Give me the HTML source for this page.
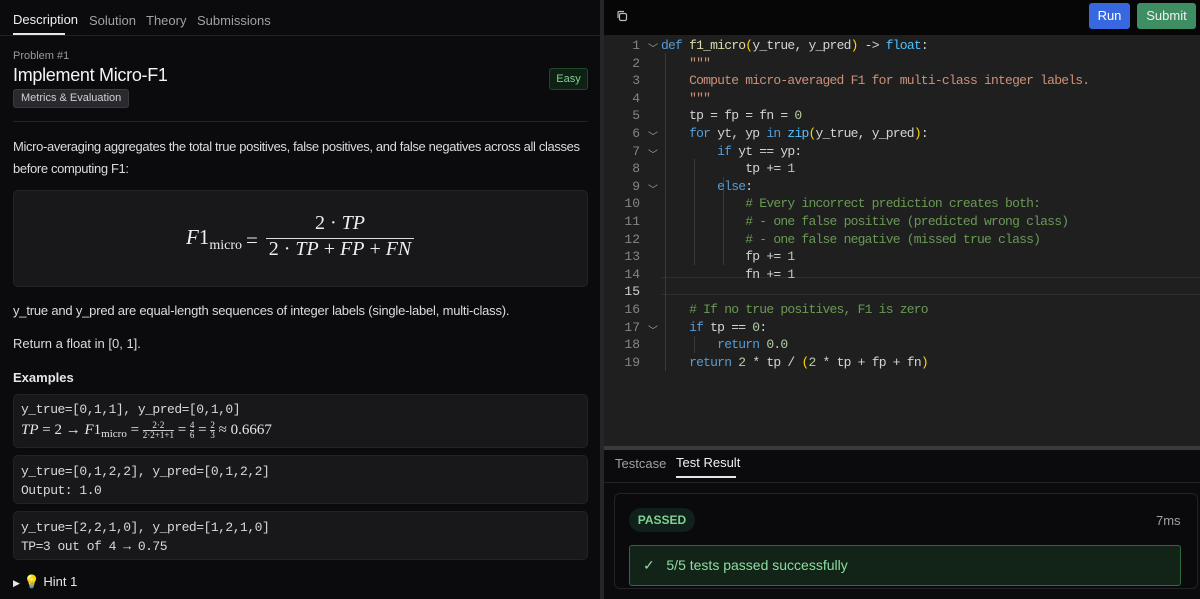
<!DOCTYPE html>
<html><head><meta charset="utf-8"><style>
*{box-sizing:border-box;margin:0;padding:0}
body{width:1200px;height:599px;background:#0b0b0d;font-family:"Liberation Sans",sans-serif;color:#e6e6e6;overflow:hidden;position:relative}
.abs{position:absolute}
#left{left:0;top:0;width:600px;height:599px;background:#0b0b0d}
#div{left:600px;top:0;width:4px;height:599px;background:#26262a}
#right{left:604px;top:0;width:596px;height:599px;background:#0b0b0d}
.tab{position:absolute;font-size:13px;color:#a0a0a6}
.box{position:absolute;background:#18181b;border:1px solid #232326;border-radius:5px}
.mono{font-family:"Liberation Mono",monospace}
.serif{font-family:"Liberation Serif",serif}
.code{position:absolute;left:0;top:35px;width:596px;height:411px;background:#1f1f1f}
.ln{position:absolute;width:36px;text-align:right;font-family:"Liberation Mono",monospace;font-size:13px;color:#858585}
.cl{position:absolute;left:57px;font-family:"Liberation Mono",monospace;font-size:13px;letter-spacing:-0.78px;color:#d4d4d4;white-space:pre}
.chev{position:absolute;left:44px;font-size:10px;color:#a0a0a0}
.k{color:#569cd6}.s{color:#ce9178}.c{color:#6a9955}.p{color:#ffd700}.n{color:#b5cea8}.f{color:#dcdcaa}.t{color:#4fc1ff}
.guide{position:absolute;width:1px;background:#3a3a3a}
</style></head><body>
<div id="left" class="abs">
 <div class="tab" style="left:13px;top:12px;color:#f0f0f0">Description</div>
 <div class="abs" style="left:13px;top:33px;width:52px;height:2px;background:#e6e6e6"></div>
 <div class="tab" style="left:89px;top:13px">Solution</div>
 <div class="tab" style="left:146px;top:13px">Theory</div>
 <div class="tab" style="left:197px;top:13px">Submissions</div>
 <div class="abs" style="left:0;top:35px;width:600px;height:1px;background:#222226"></div>
 <div class="abs" style="left:13px;top:50px;font-size:11px;color:#9a9aa0">Problem #1</div>
 <div class="abs" style="left:13px;top:65px;font-size:18px;letter-spacing:-0.3px;color:#f4f4f4">Implement Micro-F1</div>
 <div class="abs" style="left:13px;top:89px;height:19px;padding:0 7px;background:#2a2a2e;border:1px solid #3a3a3e;border-radius:3px;font-size:11px;line-height:17px;color:#d0d0d4">Metrics &amp; Evaluation</div>
 <div class="abs" style="left:549px;top:68px;width:39px;height:22px;background:#0f2115;border:1px solid #1f4a2a;border-radius:3px;font-size:11px;line-height:20px;text-align:center;color:#7fd191">Easy</div>
 <div class="abs" style="left:13px;top:121px;width:575px;height:1px;background:#222226"></div>
 <div class="abs" style="left:13px;top:136px;width:585px;font-size:13px;letter-spacing:-0.36px;line-height:22px;color:#dcdce0">Micro-averaging aggregates the total true positives, false positives, and false negatives across all classes before computing F1:</div>
 <div class="box" style="left:13px;top:190px;width:575px;height:97px"></div>
 <div class="abs serif" style="left:186px;top:225px;font-size:21px;color:#eee"><i>F</i>1<span style="font-size:14px;position:relative;top:5px">micro</span></div>
 <div class="abs serif" style="left:246px;top:228px;font-size:21px;color:#eee">=</div>
 <div class="abs serif" style="left:266px;top:212px;width:148px;text-align:center;font-size:20px;color:#eee">2 · <i>TP</i></div>
 <div class="abs" style="left:266px;top:238px;width:148px;height:1px;background:#ddd"></div>
 <div class="abs serif" style="left:266px;top:238px;width:148px;text-align:center;font-size:20px;color:#eee">2 · <i>TP</i> + <i>FP</i> + <i>FN</i></div>
 <div class="abs" style="left:13px;top:303px;font-size:13px;letter-spacing:-0.2px;color:#dcdce0">y_true and y_pred are equal-length sequences of integer labels (single-label, multi-class).</div>
 <div class="abs" style="left:13px;top:336px;font-size:13px;color:#dcdce0">Return a float in [0, 1].</div>
 <div class="abs" style="left:13px;top:370px;font-size:13px;font-weight:bold;color:#e6e6e6">Examples</div>
 <div class="box" style="left:13px;top:394px;width:575px;height:54px"></div>
 <div class="abs mono" style="left:21px;top:402px;font-size:13px;letter-spacing:-0.5px;color:#d8d8dc">y_true=[0,1,1], y_pred=[0,1,0]</div>
 <div class="abs serif" style="left:21px;top:421px;font-size:15px;color:#e6e6e6;white-space:nowrap"><i>TP</i> = 2 → <i>F</i>1<span style="font-size:11px;position:relative;top:3px">micro</span> = <span style="display:inline-block;vertical-align:middle;text-align:center;font-size:9px;line-height:9px"><span style="display:block;border-bottom:1px solid #ccc">2·2</span>2·2+1+1</span> = <span style="display:inline-block;vertical-align:middle;text-align:center;font-size:9px;line-height:9px"><span style="display:block;border-bottom:1px solid #ccc">4</span>6</span> = <span style="display:inline-block;vertical-align:middle;text-align:center;font-size:9px;line-height:9px"><span style="display:block;border-bottom:1px solid #ccc">2</span>3</span> ≈ 0.6667</div>
 <div class="box" style="left:13px;top:455px;width:575px;height:49px"></div>
 <div class="abs mono" style="left:21px;top:462px;font-size:13px;letter-spacing:-0.5px;line-height:19px;color:#d8d8dc">y_true=[0,1,2,2], y_pred=[0,1,2,2]<br>Output: 1.0</div>
 <div class="box" style="left:13px;top:511px;width:575px;height:49px"></div>
 <div class="abs mono" style="left:21px;top:518px;font-size:13px;letter-spacing:-0.5px;line-height:19px;color:#d8d8dc">y_true=[2,2,1,0], y_pred=[1,2,1,0]<br>TP=3 out of 4 → 0.75</div>
 <div class="abs" style="left:13px;top:574px;font-size:13px;color:#e6e6e6"><span style="font-size:9px">▶</span> <span style="color:#f5e6a0">💡</span> Hint 1</div>
</div>
<div id="div" class="abs"></div>
<div id="right" class="abs">
 <div class="abs" style="left:0;top:0;width:596px;height:35px;background:#060606"></div>
 <svg class="abs" style="left:12px;top:10px" width="12" height="12" viewBox="0 0 12 12"><rect x="3.5" y="3.5" width="7" height="7" rx="1.5" fill="none" stroke="#bbb" stroke-width="1.2"/><path d="M2 8V2.5Q2 1.5 3 1.5H8" fill="none" stroke="#bbb" stroke-width="1.2"/></svg>
 <div class="abs" style="left:485px;top:3px;width:41px;height:26px;background:#3868e0;border-radius:3px;font-size:13px;line-height:26px;text-align:center;color:#fff">Run</div>
 <div class="abs" style="left:533px;top:3px;width:59px;height:26px;background:#3f8e63;border-radius:3px;font-size:13px;line-height:26px;text-align:center;color:#f0f0f0">Submit</div>
 <div class="code">
  <div class="abs" style="left:57px;top:242px;width:539px;height:18px;border-top:1px solid #2e2e2e;border-bottom:1px solid #2e2e2e"></div>
  <div class="guide" style="left:61px;top:18px;height:318px"></div>
  <div class="guide" style="left:90px;top:124px;height:106px"></div>
  <div class="guide" style="left:119px;top:142px;height:88px"></div>
  <div class="guide" style="left:90px;top:301px;height:17px"></div>
 </div>
 <div class="abs" style="left:0;top:446px;width:596px;height:4px;background:#3a3a3c"></div>
 <div class="tab" style="left:11px;top:456px">Testcase</div>
 <div class="tab" style="left:72px;top:455px;color:#f0f0f0">Test Result</div>
 <div class="abs" style="left:72px;top:476px;width:60px;height:2px;background:#e6e6e6"></div>
 <div class="abs" style="left:0;top:482px;width:596px;height:1px;background:#222226"></div>
 <div class="abs" style="left:10px;top:493px;width:584px;height:96px;border:1px solid #222226;border-radius:6px;background:#0a0a0c"></div>
 <div class="abs" style="left:25px;top:508px;width:66px;height:24px;border-radius:12px;background:#10201a;font-size:12px;font-weight:bold;line-height:24px;text-align:center;color:#7fd191">PASSED</div>
 <div class="abs" style="left:552px;top:513px;font-size:13px;color:#a0a0a6">7ms</div>
 <div class="abs" style="left:25px;top:545px;width:552px;height:41px;border:1px solid #2f6a3f;border-radius:3px;background:#112417;font-size:14px;line-height:39px;color:#8fdc9f;padding-left:13px">✓&nbsp;&nbsp;&nbsp;5/5 tests passed successfully</div>
</div>
<div class="abs" style="left:604px;top:35px;width:596px;height:411px">
 <div class="ln" style="top:3px">1</div><div class="chev" style="top:5px">﹀</div><div class="cl" style="top:3px"><span class="k">def</span> <span class="f">f1_micro</span><span class="p">(</span>y_true, y_pred<span class="p">)</span> -&gt; <span class="t">float</span>:</div>
 <div class="ln" style="top:20.6px">2</div><div class="cl" style="top:20.6px">    <span class="s">"""</span></div>
 <div class="ln" style="top:38.2px">3</div><div class="cl" style="top:38.2px">    <span class="s">Compute micro-averaged F1 for multi-class integer labels.</span></div>
 <div class="ln" style="top:55.8px">4</div><div class="cl" style="top:55.8px">    <span class="s">"""</span></div>
 <div class="ln" style="top:73.4px">5</div><div class="cl" style="top:73.4px">    tp = fp = fn = <span class="n">0</span></div>
 <div class="ln" style="top:91px">6</div><div class="chev" style="top:93px">﹀</div><div class="cl" style="top:91px">    <span class="k">for</span> yt, yp <span class="k">in</span> <span class="t">zip</span><span class="p">(</span>y_true, y_pred<span class="p">)</span>:</div>
 <div class="ln" style="top:108.6px">7</div><div class="chev" style="top:110.6px">﹀</div><div class="cl" style="top:108.6px">        <span class="k">if</span> yt == yp:</div>
 <div class="ln" style="top:126.2px">8</div><div class="cl" style="top:126.2px">            tp += <span class="n">1</span></div>
 <div class="ln" style="top:143.8px">9</div><div class="chev" style="top:145.8px">﹀</div><div class="cl" style="top:143.8px">        <span class="k">else</span>:</div>
 <div class="ln" style="top:161.4px">10</div><div class="cl" style="top:161.4px">            <span class="c"># Every incorrect prediction creates both:</span></div>
 <div class="ln" style="top:179px">11</div><div class="cl" style="top:179px">            <span class="c"># - one false positive (predicted wrong class)</span></div>
 <div class="ln" style="top:196.6px">12</div><div class="cl" style="top:196.6px">            <span class="c"># - one false negative (missed true class)</span></div>
 <div class="ln" style="top:214.2px">13</div><div class="cl" style="top:214.2px">            fp += <span class="n">1</span></div>
 <div class="ln" style="top:231.8px">14</div><div class="cl" style="top:231.8px">            fn += <span class="n">1</span></div>
 <div class="ln" style="top:249.4px;color:#d0d0d0">15</div>
 <div class="ln" style="top:267px">16</div><div class="cl" style="top:267px">    <span class="c"># If no true positives, F1 is zero</span></div>
 <div class="ln" style="top:284.6px">17</div><div class="chev" style="top:286.6px">﹀</div><div class="cl" style="top:284.6px">    <span class="k">if</span> tp == <span class="n">0</span>:</div>
 <div class="ln" style="top:302.2px">18</div><div class="cl" style="top:302.2px">        <span class="k">return</span> <span class="n">0.0</span></div>
 <div class="ln" style="top:319.8px">19</div><div class="cl" style="top:319.8px">    <span class="k">return</span> <span class="n">2</span> * tp / <span class="p">(</span><span class="n">2</span> * tp + fp + fn<span class="p">)</span></div>
</div>
</body></html>
